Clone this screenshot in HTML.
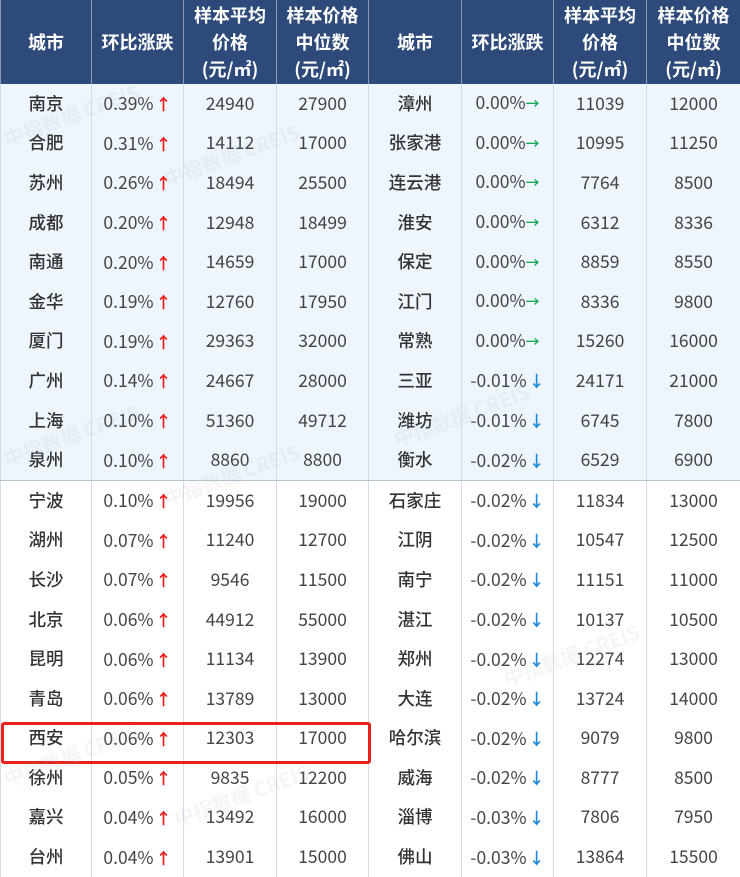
<!DOCTYPE html>
<html><head><meta charset="utf-8"><style>
body{margin:0;width:740px;height:876px;overflow:hidden;background:#fff;font-family:"Noto Sans CJK SC","Liberation Sans",sans-serif;position:relative}
table{border-collapse:collapse;table-layout:fixed;width:740px;position:absolute;left:0;top:0}
td,th{text-align:center;padding:0;border-left:1px solid #d4dbe6;border-right:1px solid #d4dbe6;vertical-align:middle}
th{background:#2e4a7b;color:#fff;font-size:18px;font-weight:bold;height:84px;line-height:27px;border-color:#8a9ab5}
td{height:39.6px;font-size:17.5px;color:#444;line-height:20px}
tr.b td{background:#eef5fd}
tr.sep td{border-bottom:1px solid #b9c2d0}
td.c{color:#333;font-weight:500;font-size:17.5px}
.u{color:#f01818;font-weight:bold;margin-left:2px;font-size:16px}.d{color:#1d8ae0;font-weight:bold;margin-left:2px;font-size:16px}.g{color:#1aaa55;font-size:14px;font-weight:bold}
.box{position:absolute;left:1px;top:722px;width:364px;height:36px;border:3px solid #e8211b;border-radius:3px}
.wm{position:absolute;color:rgba(160,170,185,0.12);font-size:20px;font-weight:bold;transform:rotate(-20deg);white-space:nowrap}
</style></head><body>
<table>
<colgroup><col width="91"><col width="92"><col width="93"><col width="92"><col width="93"><col width="92"><col width="93"><col width="94"></colgroup>
<tr><th>城市</th><th>环比涨跌</th><th>样本平均<br>价格<br>(元/㎡)</th><th>样本价格<br>中位数<br>(元/㎡)</th><th>城市</th><th>环比涨跌</th><th>样本平均<br>价格<br>(元/㎡)</th><th>样本价格<br>中位数<br>(元/㎡)</th></tr>
<tr class="b"><td class="c">南京</td><td>0.39%<span class="u">↑</span></td><td>24940</td><td>27900</td><td class="c">漳州</td><td>0.00%<span class="g">→</span></td><td>11039</td><td>12000</td></tr>
<tr class="b"><td class="c">合肥</td><td>0.31%<span class="u">↑</span></td><td>14112</td><td>17000</td><td class="c">张家港</td><td>0.00%<span class="g">→</span></td><td>10995</td><td>11250</td></tr>
<tr class="b"><td class="c">苏州</td><td>0.26%<span class="u">↑</span></td><td>18494</td><td>25500</td><td class="c">连云港</td><td>0.00%<span class="g">→</span></td><td>7764</td><td>8500</td></tr>
<tr class="b"><td class="c">成都</td><td>0.20%<span class="u">↑</span></td><td>12948</td><td>18499</td><td class="c">淮安</td><td>0.00%<span class="g">→</span></td><td>6312</td><td>8336</td></tr>
<tr class="b"><td class="c">南通</td><td>0.20%<span class="u">↑</span></td><td>14659</td><td>17000</td><td class="c">保定</td><td>0.00%<span class="g">→</span></td><td>8859</td><td>8550</td></tr>
<tr class="b"><td class="c">金华</td><td>0.19%<span class="u">↑</span></td><td>12760</td><td>17950</td><td class="c">江门</td><td>0.00%<span class="g">→</span></td><td>8336</td><td>9800</td></tr>
<tr class="b"><td class="c">厦门</td><td>0.19%<span class="u">↑</span></td><td>29363</td><td>32000</td><td class="c">常熟</td><td>0.00%<span class="g">→</span></td><td>15260</td><td>16000</td></tr>
<tr class="b"><td class="c">广州</td><td>0.14%<span class="u">↑</span></td><td>24667</td><td>28000</td><td class="c">三亚</td><td>-0.01%<span class="d">↓</span></td><td>24171</td><td>21000</td></tr>
<tr class="b"><td class="c">上海</td><td>0.10%<span class="u">↑</span></td><td>51360</td><td>49712</td><td class="c">潍坊</td><td>-0.01%<span class="d">↓</span></td><td>6745</td><td>7800</td></tr>
<tr class="b sep"><td class="c">泉州</td><td>0.10%<span class="u">↑</span></td><td>8860</td><td>8800</td><td class="c">衡水</td><td>-0.02%<span class="d">↓</span></td><td>6529</td><td>6900</td></tr>
<tr><td class="c">宁波</td><td>0.10%<span class="u">↑</span></td><td>19956</td><td>19000</td><td class="c">石家庄</td><td>-0.02%<span class="d">↓</span></td><td>11834</td><td>13000</td></tr>
<tr><td class="c">湖州</td><td>0.07%<span class="u">↑</span></td><td>11240</td><td>12700</td><td class="c">江阴</td><td>-0.02%<span class="d">↓</span></td><td>10547</td><td>12500</td></tr>
<tr><td class="c">长沙</td><td>0.07%<span class="u">↑</span></td><td>9546</td><td>11500</td><td class="c">南宁</td><td>-0.02%<span class="d">↓</span></td><td>11151</td><td>11000</td></tr>
<tr><td class="c">北京</td><td>0.06%<span class="u">↑</span></td><td>44912</td><td>55000</td><td class="c">湛江</td><td>-0.02%<span class="d">↓</span></td><td>10137</td><td>10500</td></tr>
<tr><td class="c">昆明</td><td>0.06%<span class="u">↑</span></td><td>11134</td><td>13900</td><td class="c">郑州</td><td>-0.02%<span class="d">↓</span></td><td>12274</td><td>13000</td></tr>
<tr><td class="c">青岛</td><td>0.06%<span class="u">↑</span></td><td>13789</td><td>13000</td><td class="c">大连</td><td>-0.02%<span class="d">↓</span></td><td>13724</td><td>14000</td></tr>
<tr><td class="c">西安</td><td>0.06%<span class="u">↑</span></td><td>12303</td><td>17000</td><td class="c">哈尔滨</td><td>-0.02%<span class="d">↓</span></td><td>9079</td><td>9800</td></tr>
<tr><td class="c">徐州</td><td>0.05%<span class="u">↑</span></td><td>9835</td><td>12200</td><td class="c">威海</td><td>-0.02%<span class="d">↓</span></td><td>8777</td><td>8500</td></tr>
<tr><td class="c">嘉兴</td><td>0.04%<span class="u">↑</span></td><td>13492</td><td>16000</td><td class="c">淄博</td><td>-0.03%<span class="d">↓</span></td><td>7806</td><td>7950</td></tr>
<tr><td class="c">台州</td><td>0.04%<span class="u">↑</span></td><td>13901</td><td>15000</td><td class="c">佛山</td><td>-0.03%<span class="d">↓</span></td><td>13864</td><td>15500</td></tr>
</table>
<div class="box"></div>
<div class="wm" style="left:0;top:100px">中指数据 CREIS</div>
<div class="wm" style="left:160px;top:140px">中指数据 CREIS</div>
<div class="wm" style="left:0;top:420px">中指数据 CREIS</div>
<div class="wm" style="left:160px;top:460px">中指数据 CREIS</div>
<div class="wm" style="left:390px;top:400px">中指数据 CREIS</div>
<div class="wm" style="left:0;top:740px">中指数据 CREIS</div>
<div class="wm" style="left:170px;top:780px">中指数据 CREIS</div>
<div class="wm" style="left:500px;top:640px">中指数据 CREIS</div>
</body></html>
